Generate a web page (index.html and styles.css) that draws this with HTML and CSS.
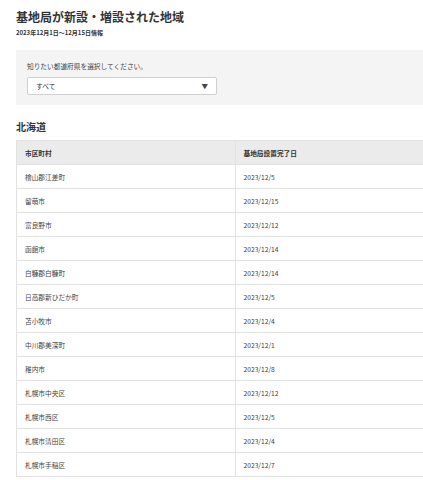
FILE: index.html
```html
<!DOCTYPE html>
<html lang="ja">
<head>
  <meta charset="UTF-8">
  <title>基地局が新設・増設された地域</title>
  <meta name="viewport" content="width=device-width, initial-scale=1.0">
  <link rel="stylesheet" href="styles.css">
</head>
<body>
  <div class="page">
    <h1>基地局が新設・増設された地域</h1>
    <p class="period">2023年12月1日～12月15日情報</p>

    <div class="filter">
      <p class="filter-label">知りたい都道府県を選択してください。</p>
      <div class="select">
        <span>すべて</span>
        <span class="arrow">▼</span>
      </div>
    </div>

    <h2>北海道</h2>
    <table class="areas">
      <thead>
        <tr><th>市区町村</th><th>基地局設置完了日</th></tr>
      </thead>
      <tbody>
        <tr><td>檜山郡江差町</td><td>2023/12/5</td></tr>
        <tr><td>留萌市</td><td>2023/12/15</td></tr>
        <tr><td>富良野市</td><td>2023/12/12</td></tr>
        <tr><td>函館市</td><td>2023/12/14</td></tr>
        <tr><td>白糠郡白糠町</td><td>2023/12/14</td></tr>
        <tr><td>日高郡新ひだか町</td><td>2023/12/5</td></tr>
        <tr><td>苫小牧市</td><td>2023/12/4</td></tr>
        <tr><td>中川郡美深町</td><td>2023/12/1</td></tr>
        <tr><td>稚内市</td><td>2023/12/8</td></tr>
        <tr><td>札幌市中央区</td><td>2023/12/12</td></tr>
        <tr><td>札幌市西区</td><td>2023/12/5</td></tr>
        <tr><td>札幌市清田区</td><td>2023/12/4</td></tr>
        <tr><td>札幌市手稲区</td><td>2023/12/7</td></tr>
      </tbody>
    </table>
  </div>
</body>
</html>
```

FILE: styles.css
```css
html, body {
  overflow: hidden;
}

body {
  margin: 0;
  font-family: "Noto Sans CJK JP", sans-serif;
  color: #333;
  background: #fff;
}

.page {
  width: 438px;
  padding: 6px 0 0 16px;
}

h1 {
  margin: 0;
  font-size: 12px;
  line-height: 22px;
  font-weight: bold;
  color: #333;
}

.period {
  margin: 0;
  font-size: 6px;
  line-height: 10px;
  font-weight: bold;
}

.filter {
  margin-top: 12px;
  background: #f4f4f4;
  padding: 10px 11px 10px;
}

.filter-label {
  margin: 0 0 5px;
  font-size: 6.7px;
  line-height: 12px;
  color: #444;
}

.select {
  width: 190px;
  height: 18px;
  box-sizing: border-box;
  display: flex;
  align-items: center;
  justify-content: space-between;
  padding: 0 8px 0 8px;
  background: #fff;
  border: 1px solid #cfcfcf;
  border-radius: 2px;
  font-size: 6.7px;
}

.select .arrow {
  font-size: 6.5px;
  color: #444;
}

h2 {
  margin: 13px 0 0;
  font-size: 10px;
  line-height: 18px;
  font-weight: bold;
}

.areas {
  margin-top: 4px;
  width: 438px;
  border-collapse: collapse;
  table-layout: fixed;
  font-size: 6.7px;
}

.areas th,
.areas td {
  height: 24px;
  box-sizing: border-box;
  padding: 0 8px;
  text-align: left;
  border: 1px solid #e2e2e2;
}

.areas th {
  background: #ebebeb;
  font-weight: bold;
}

.areas td {
  color: #444;
}
```
